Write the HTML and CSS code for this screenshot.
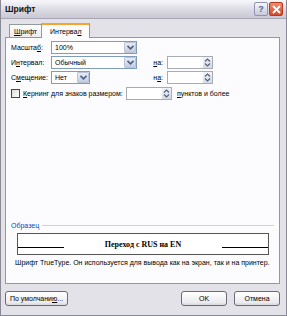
FILE: index.html
```html
<!DOCTYPE html>
<html>
<head>
<meta charset="utf-8">
<link rel="stylesheet" href="styles.css">
</head>
<body>
<div class="window">
  <div class="titlebar">
    <span class="title">Шрифт</span>
    <div class="tb-btns">
      <span class="tb-btn help">?</span>
      <span class="tb-btn close"><svg width="9" height="9" viewBox="0 0 9 9"><path d="M1 1L8 8M8 1L1 8" stroke="#fff" stroke-width="1.8"/></svg></span>
    </div>
  </div>
  <div class="client">
    <div class="tabs">
      <div class="tab"><u>Ш</u>рифт</div>
      <div class="tab active">Интерва<u>л</u></div>
    </div>
    <div class="panel">
      <div class="grid">
        <span class="lbl">Масшта<u>б</u>:</span>
        <div class="select wide"><span>100%</span><span class="dd"><svg width="7" height="5" viewBox="0 0 7 5"><path d="M0.5 0.8L3.5 3.8L6.5 0.8" fill="none" stroke="#4d6185" stroke-width="1.6"/></svg></span></div>
        <span></span><span></span>

        <span class="lbl">И<u>н</u>тервал:</span>
        <div class="select wide"><span>Обычный</span><span class="dd"><svg width="7" height="5" viewBox="0 0 7 5"><path d="M0.5 0.8L3.5 3.8L6.5 0.8" fill="none" stroke="#4d6185" stroke-width="1.6"/></svg></span></div>
        <span class="lbl na"><u>н</u>а:</span>
        <div class="spin"><span class="field"></span><span class="arrows"><svg width="7" height="9" viewBox="0 0 7 9"><path d="M1 3.5L3.5 1L6 3.5M1 5.5L3.5 8L6 5.5" fill="none" stroke="#4d6185" stroke-width="1.2"/></svg></span></div>

        <span class="lbl">С<u>м</u>ещение:</span>
        <div class="select narrow"><span>Нет</span><span class="dd"><svg width="7" height="5" viewBox="0 0 7 5"><path d="M0.5 0.8L3.5 3.8L6.5 0.8" fill="none" stroke="#4d6185" stroke-width="1.6"/></svg></span></div>
        <span class="lbl na">н<u>а</u>:</span>
        <div class="spin"><span class="field"></span><span class="arrows"><svg width="7" height="9" viewBox="0 0 7 9"><path d="M1 3.5L3.5 1L6 3.5M1 5.5L3.5 8L6 5.5" fill="none" stroke="#4d6185" stroke-width="1.2"/></svg></span></div>
      </div>
      <div class="kern">
        <span class="check"></span>
        <span class="klbl"><u>К</u>ернинг для знаков размером:</span>
        <div class="spin kspin"><span class="field"></span><span class="arrows"><svg width="7" height="9" viewBox="0 0 7 9"><path d="M1 3.5L3.5 1L6 3.5M1 5.5L3.5 8L6 5.5" fill="none" stroke="#4d6185" stroke-width="1.2"/></svg></span></div>
        <span class="unit"><u>п</u>унктов и более</span>
      </div>
      <div class="sample">
        <div class="legend"><span>Образец</span><span class="rule"></span></div>
        <div class="preview">
          <span class="pline"></span>
          <span class="ptext">Переход с RUS на EN</span>
          <span class="pline"></span>
        </div>
        <div class="note">Шрифт TrueType. Он используется для вывода как на экран, так и на принтер.</div>
      </div>
    </div>
    <div class="buttons">
      <button class="btn def">По умолчани<u>ю</u>...</button>
      <span class="grow"></span>
      <button class="btn">OK</button>
      <button class="btn">Отмена</button>
    </div>
  </div>
</div>
</body>
</html>
```
FILE: styles.css
```css
* { box-sizing: border-box; }
html, body { margin: 0; padding: 0; }
body {
  width: 287px; height: 316px; overflow: hidden;
  font-family: "Liberation Sans", Arial, sans-serif; font-size: 7px; color: #000;
  background: #c7c6d0;
}
u { text-decoration: underline; }
.window {
  width: 287px; height: 316px;
  border: 1px solid #8a8996;
  border-top: 0;
  background: #e3e2e9;
  display: flex; flex-direction: column;
}
.titlebar {
  height: 19px; display: flex; align-items: center;
  padding: 0 3px 0 4px;
  background: linear-gradient(#f8f8fb, #d9d8e2 60%, #c9c8d4);
  border-bottom: 1px solid #a8a7b6;
}
.title { font-weight: bold; font-size: 8.5px; color: #111; flex: 1; }
.tb-btns { display: flex; gap: 1px; }
.tb-btn {
  width: 14px; height: 14px; border-radius: 2px;
  display: flex; align-items: center; justify-content: center;
  font-weight: bold; font-size: 9px;
}
.help { background: linear-gradient(#f6f6fa, #c8c9dc); border: 1px solid #8d93b0; color: #4b6390; }
.close { background: linear-gradient(#f08a6c, #d44b2b); border: 1px solid #b5391f; }
.client { flex: 1; display: flex; flex-direction: column; padding: 3px 6px 9px 4px; }
.tabs { display: flex; padding-left: 4px; height: 15px; align-items: flex-end; }
.tab {
  height: 13px; padding: 0 4px; display: flex; align-items: center;
  border: 1px solid #919b9c; border-bottom: 0; background: linear-gradient(#fdfdfd, #ececf0);
  margin-right: -1px;
}
.tab.active {
  height: 15px; background: #fcfcfe; border-top: 2px solid #f6a330;
  position: relative; z-index: 1; margin-bottom: -1px; padding: 0 8px;
}
.panel {
  flex: 1; background: #fcfcfe; border: 1px solid #919b9c;
  display: flex; flex-direction: column; padding: 3px 5px 17px 5px;
}
.grid {
  display: grid; grid-template-columns: 40px 96px 20px 46px;
  row-gap: 2px; align-items: center;
}
.na { justify-self: end; padding-right: 4px; }
.select {
  height: 13px; border: 1px solid #7f9db9; background: #fff;
  display: flex; align-items: center; padding-left: 3px; justify-content: space-between;
}
.select.wide { width: 86px; }
.select.narrow { width: 39px; }
.dd {
  width: 12px; height: 11px; display: flex; align-items: center; justify-content: center;
  background: linear-gradient(#e8ecf6, #c4cde0); border: 1px solid #b9c4db; border-radius: 1px;
}
.spin { display: flex; height: 13px; width: 46px; border: 1px solid #a5acb5; background: #fff; }
.field { flex: 1; }
.arrows {
  width: 9px; display: flex; align-items: center; justify-content: center;
  background: linear-gradient(#f3f3f6, #d7d9e2);
}
.kern { display: flex; align-items: center; height: 13px; margin-top: 3px; }
.check { width: 9px; height: 9px; border: 1px solid #1c5180; background: linear-gradient(135deg, #dcdcd7, #fff); margin-right: 3px; flex-shrink: 0; }
.klbl { width: 103px; white-space: nowrap; flex-shrink: 0; }
.kspin { width: 46px; flex-shrink: 0; }
.unit { margin-left: 5px; white-space: nowrap; }
.sample { margin-top: auto; }
.legend { display: flex; align-items: center; color: #0046d5; gap: 3px; }
.rule { flex: 1; height: 1px; background: #d0d0d8; }
.preview {
  margin: 4px 5px 0 6px; height: 22px; border: 1px solid #555; background: #fff;
  display: flex; align-items: center; padding-top: 6px;
}
.pline { width: 46px; height: 1px; background: #000; }
.ptext { flex: 1; text-align: center; font-family: "Liberation Serif", serif; font-weight: bold; font-size: 8px; margin-top: -6px; }
.note { margin: 4px 0 0 4px; white-space: nowrap; }
.buttons { display: flex; gap: 7px; padding-top: 7px; align-items: center; }
.grow { flex: 1; }
.btn {
  font: inherit; height: 15px; width: 46px; padding: 0;
  border: 1px solid #6a6a7a; border-radius: 3px;
  background: linear-gradient(#fff, #ecebf0 80%, #d6d5de);
}
.btn.def { width: 63px; }
```
